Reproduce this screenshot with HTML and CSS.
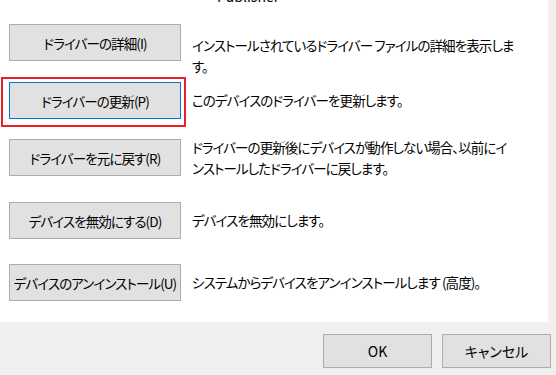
FILE: index.html
```html
<!DOCTYPE html>
<html lang="ja">
<head>
    <meta charset="UTF-8">
    <meta name="viewport" content="width=device-width, initial-scale=1.0">
    <title>ドライバー</title>
    <link rel="stylesheet" href="styles.css">
</head>
<body>

<div class="panel">
    <div class="publisher">Publisher</div>

    <div class="actions">
        <div class="row">
            <button class="btn">ドライバーの詳細(I)</button>
            <p class="desc first">インストールされているドライバー ファイルの詳細を表示しま<br>す。</p>
        </div>
        <div class="row">
            <button class="btn focused">ドライバーの更新(P)</button>
            <p class="desc">このデバイスのドライバーを更新します。</p>
        </div>
        <div class="row">
            <button class="btn">ドライバーを元に戻す(R)</button>
            <p class="desc">ドライバーの更新後にデバイスが動作しない場合、以前にイ<br>ンストールしたドライバーに戻します。</p>
        </div>
        <div class="row">
            <button class="btn">デバイスを無効にする(D)</button>
            <p class="desc">デバイスを無効にします。</p>
        </div>
        <div class="row">
            <button class="btn">デバイスのアンインストール(U)</button>
            <p class="desc">システムからデバイスをアンインストールします (高度)。</p>
        </div>
    </div>

    <div class="highlight"></div>
</div>

<div class="footer">
    <button class="btn small">OK</button>
    <button class="btn small">キャンセル</button>
</div>

</body>
</html>
```

FILE: styles.css
```css
* {
    margin: 0;
    padding: 0;
    box-sizing: border-box;
    font-family: 'Noto Sans CJK JP', sans-serif;
    font-feature-settings: "palt";
}

body {
    background-color: #f0f0f0;
    color: #000;
    font-size: 13.5px;
    letter-spacing: -0.9px;
    width: 556px;
    height: 375px;
    overflow: hidden;
}

.panel {
    position: relative;
    width: 548px;
    height: 322px;
    background-color: white;
    overflow: hidden;
}

.publisher {
    margin-top: -14px;
    padding-left: 217px;
    line-height: 20px;
    letter-spacing: 0;
    font-size: 14px;
}

.actions {
    display: grid;
    grid-template-rows: 58px 57px 63px 62px 37px;
    padding: 18px 0 0 9px;
}

.row {
    display: flex;
    align-items: center;
    gap: 11px;
    height: 37px;
}

.btn {
    width: 172px;
    height: 37px;
    padding: 0 2px;
    background-color: #e1e1e1;
    border: 1px solid #adadad;
    color: #000;
    font-size: 13.5px;
    letter-spacing: -0.9px;
    flex-shrink: 0;
}

.btn.focused {
    border-color: #0078d7;
}

.desc {
    line-height: 21px;
    white-space: nowrap;
}

.desc.first {
    align-self: flex-start;
    margin-top: 11px;
}

.highlight {
    position: absolute;
    left: 1px;
    top: 77px;
    width: 185px;
    height: 50px;
    border: 2px solid #e8202a;
}

.footer {
    display: flex;
    justify-content: flex-end;
    gap: 10px;
    padding: 12px 5px 0 0;
}

.btn.small {
    width: 109px;
    height: 34px;
    font-size: 14px;
    letter-spacing: 0;
}
```
